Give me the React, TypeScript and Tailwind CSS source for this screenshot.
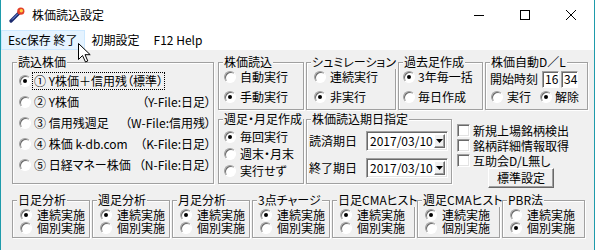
import type { ReactNode } from "react";

const Radio = ({ on }: { on?: boolean }) => (
  <span className="flex h-[12px] w-[12px] shrink-0 items-center justify-center rounded-full border border-t-[#a0a0a0] border-l-[#a0a0a0] border-r-white border-b-white bg-white shadow-[inset_1px_1px_0_#696969]">
    {on && <span className="h-[4px] w-[4px] rounded-full bg-black" />}
  </span>
);

const Check = () => (
  <span className="h-[13px] w-[13px] shrink-0 border border-t-[#a0a0a0] border-l-[#a0a0a0] border-r-white border-b-white bg-white shadow-[inset_1px_1px_0_#696969,inset_-1px_-1px_0_#e3e3e3]" />
);

function Frame({ title, className, children }: { title: string; className: string; children?: ReactNode }) {
  return (
    <div className={`relative shrink-0 border border-[#a0a0a0] shadow-[inset_1px_1px_0_#fff,1px_1px_0_#fff] ${className}`}>
      <span className="absolute -top-[8px] left-[4px] whitespace-nowrap bg-[#f0f0f0] px-px leading-[14px]">{title}</span>
      {children}
    </div>
  );
}

function Combo({ value }: { value: string }) {
  return (
    <div className="flex h-[20px] w-[82px] items-stretch border border-t-[#a0a0a0] border-l-[#a0a0a0] border-r-white border-b-white bg-white p-[1px] shadow-[inset_1px_1px_0_#696969,inset_-1px_-1px_0_#e3e3e3]">
      <span className="flex flex-1 items-center pl-[2px]">{value}</span>
      <span className="m-px flex w-[16px] items-center justify-center border border-t-white border-l-white border-r-[#696969] border-b-[#696969] bg-[#f0f0f0] shadow-[inset_-1px_-1px_0_#a0a0a0]">
        <svg width="7" height="4" viewBox="0 0 7 4">
          <path d="M0 0h7L3.5 4z" fill="#000" />
        </svg>
      </span>
    </div>
  );
}

const Spin = ({ v }: { v: string }) => (
  <span className="flex h-[17px] w-[17px] items-center border border-t-[#a0a0a0] border-l-[#a0a0a0] border-r-white border-b-white bg-white pl-[2px] shadow-[inset_1px_1px_0_#696969]">
    {v}
  </span>
);

const sources = [
  { label: "①  Y株価＋信用残（標準）", tag: "", on: true },
  { label: "②  Y株価", tag: "（Y-File:日足）" },
  { label: "③  信用残週足", tag: "（W-File:信用残）" },
  { label: "④  株価 k-db.com", tag: "（K-File:日足）" },
  { label: "⑤  日経マネー株価", tag: "（N-File:日足）" },
];

const analyses = [
  { title: "日足分析", w: "w-[78px]", first: true },
  { title: "週足分析", w: "w-[78px]", first: true },
  { title: "月足分析", w: "w-[78px]", first: true },
  { title: "3点チャージ", w: "w-[78px]", first: true },
  { title: "日足CMAヒスト", w: "w-[83px]", first: true },
  { title: "週足CMAヒスト", w: "w-[83px]", first: true },
  { title: "PBR法", w: "w-[83px]", first: false },
];

export default function App() {
  return (
    <div className="relative h-[250px] w-[596px] overflow-hidden bg-white font-['Noto_Sans_CJK_JP','Noto_Sans',sans-serif] text-[12px] leading-[14px] text-black [font-feature-settings:'palt']">
      <div className="flex h-full w-[595px] flex-col border-x border-[#1e9bab]">
        {/* title bar */}
        <div className="flex h-[30px] shrink-0 items-center">
          <svg className="ml-[8px]" width="16" height="16" viewBox="0 0 16 16">
            <line x1="2" y1="14" x2="10" y2="6" stroke="#1b2a6e" strokeWidth="3.2" strokeLinecap="round" />
            <line x1="3" y1="12.6" x2="9" y2="6.6" stroke="#7f9ff0" strokeWidth="1" />
            <circle cx="11.8" cy="4.2" r="3.6" fill="#e3402a" />
            <circle cx="12.3" cy="3.7" r="1.7" fill="#ffd040" />
          </svg>
          <span className="ml-[7px]">株価読込設定</span>
          <div className="ml-auto flex h-full">
            <span className="flex w-[46px] items-center justify-center">
              <span className="h-px w-[10px] bg-black" />
            </span>
            <span className="flex w-[46px] items-center justify-center">
              <span className="h-[10px] w-[10px] border border-black" />
            </span>
            <span className="flex w-[46px] items-center justify-center">
              <svg width="10" height="10" viewBox="0 0 10 10">
                <path d="M0 0L10 10M10 0L0 10" stroke="#000" strokeWidth="1" />
              </svg>
            </span>
          </div>
        </div>

        {/* menu bar */}
        <div className="flex h-[20px] shrink-0 items-stretch">
          <span className="flex items-center border border-[#cce8ff] bg-[#e5f3ff] px-[6px]">Esc保存 終了</span>
          <span className="flex items-center px-[7px]">初期設定</span>
          <span className="flex items-center px-[7px]">F12 Help</span>
        </div>

        {/* body */}
        <div className="flex-1 bg-[#f0f0f0] pl-[11px] pt-[12px]">
          <div className="flex gap-[4px]">
            <Frame title="読込株価" className="h-[122px] w-[202px] pl-[6px] pr-[2px] pt-[7px]">
              {sources.map((s, i) => (
                <div key={i} className="flex h-[21px] items-center whitespace-nowrap">
                  <Radio on={s.on} />
                  <span className={`ml-px flex h-[18px] items-center border border-dotted px-px ${s.on ? "border-black" : "border-transparent"}`}>
                    {s.label}
                  </span>
                  <span className="ml-auto">{s.tag}</span>
                </div>
              ))}
            </Frame>

            <div className="flex flex-col gap-[9px]">
              <div className="flex gap-[2px]">
                <Frame title="株価読込" className="h-[48px] w-[86px] pl-[5px] pt-[4px]">
                  <div className="flex h-[20px] items-center"><Radio /><span className="ml-[4px]">自動実行</span></div>
                  <div className="flex h-[20px] items-center"><Radio on /><span className="ml-[4px]">手動実行</span></div>
                </Frame>
                <Frame title="シュミレーション" className="h-[48px] w-[90px] pl-[7px] pt-[4px]">
                  <div className="flex h-[20px] items-center"><Radio /><span className="ml-[4px]">連続実行</span></div>
                  <div className="flex h-[20px] items-center"><Radio on /><span className="ml-[4px]">非実行</span></div>
                </Frame>
                <Frame title="過去足作成" className="h-[48px] w-[85px] pl-[4px] pt-[4px]">
                  <div className="flex h-[20px] items-center"><Radio on /><span className="ml-[3px]">3年毎一括</span></div>
                  <div className="flex h-[20px] items-center"><Radio /><span className="ml-[3px]">毎日作成</span></div>
                </Frame>
                <Frame title="株価自動D／L" className="h-[48px] w-[103px] pl-[4px] pt-[6px]">
                  <div className="flex h-[20px] items-center">
                    <span>開始時刻</span>
                    <span className="ml-[4px]"><Spin v="16" /></span>
                    <span className="ml-[2px]"><Spin v="34" /></span>
                  </div>
                  <div className="flex h-[16px] items-center pl-px">
                    <Radio /><span className="ml-[4px]">実行</span>
                    <span className="ml-[9px]"><Radio on /></span><span className="ml-[3px]">解除</span>
                  </div>
                </Frame>
              </div>

              <div className="flex">
                <Frame title="週足・月足作成" className="h-[65px] w-[86px] pl-[5px] pt-[8px]">
                  <div className="flex h-[17px] items-center"><Radio on /><span className="ml-[4px]">毎回実行</span></div>
                  <div className="flex h-[17px] items-center"><Radio /><span className="ml-[4px]">週末・月末</span></div>
                  <div className="flex h-[17px] items-center"><Radio /><span className="ml-[4px]">実行せず</span></div>
                </Frame>
                <Frame title="株価読込期日指定" className="ml-[2px] flex h-[65px] w-[146px] flex-col gap-[7px] pl-[2px] pt-[11px]">
                  <div className="flex h-[20px] items-center"><span>読済期日</span><span className="ml-[9px]"><Combo value="2017/03/10" /></span></div>
                  <div className="flex h-[20px] items-center"><span>終了期日</span><span className="ml-[9px]"><Combo value="2017/03/10" /></span></div>
                </Frame>
                <div className="ml-[5px] flex flex-col pt-[4px]">
                  <div className="flex h-[15px] items-center"><Check /><span className="ml-[3px] leading-[13px]">新規上場銘柄検出</span></div>
                  <div className="flex h-[15px] items-center"><Check /><span className="ml-[3px] leading-[13px]">銘柄詳細情報取得</span></div>
                  <div className="flex h-[15px] items-center"><Check /><span className="ml-[3px] leading-[13px]">互助会D/L無し</span></div>
                  <button className="ml-[31px] h-[20px] w-[66px] border border-t-white border-l-white border-r-[#696969] border-b-[#696969] bg-[#f0f0f0] shadow-[inset_-1px_-1px_0_#a0a0a0]">
                    標準設定
                  </button>
                </div>
              </div>
            </div>
          </div>

          <div className="mt-[12px] flex gap-[2px]">
            {analyses.map((a) => (
              <Frame key={a.title} title={a.title} className={`h-[38px] ${a.w} pl-[7px] pt-[7px]`}>
                <div className="flex h-[13px] items-center"><Radio on={a.first} /><span className="ml-[5px] leading-[12px]">連続実施</span></div>
                <div className="flex h-[13px] items-center"><Radio on={!a.first} /><span className="ml-[5px] leading-[12px]">個別実施</span></div>
              </Frame>
            ))}
          </div>
        </div>
      </div>

      {/* mouse pointer */}
      <svg className="absolute left-[78px] top-[43px]" width="13" height="20" viewBox="0 0 13 20">
        <path d="M0.5 0.5V16.5L4.5 12.5L7.5 19L9.8 18L7 11.7H12.2Z" fill="#fff" stroke="#000" strokeWidth="1" strokeLinejoin="round" />
      </svg>
    </div>
  );
}
